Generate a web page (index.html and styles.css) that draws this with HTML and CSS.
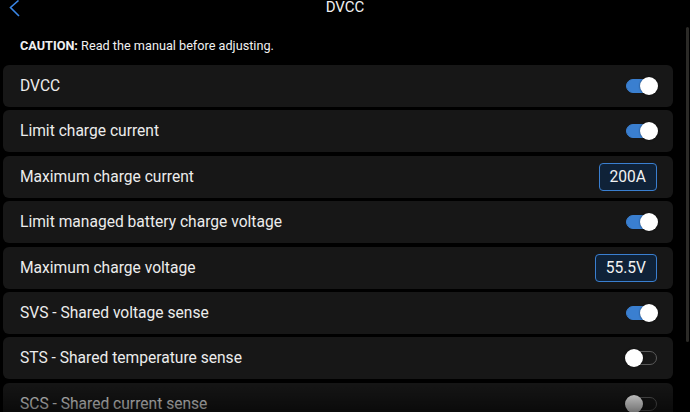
FILE: index.html
```html
<!DOCTYPE html>
<html>
<head>
<meta charset="utf-8">
<link rel="stylesheet" href="styles.css">
</head>
<body>
<div class="screen">
  <header class="topbar">
    <svg class="back" width="14" height="18" viewBox="0 0 14 18"><polyline points="9.5,0.5 1.5,7.5 10,16" fill="none" stroke="#3a86e6" stroke-width="1.6"/></svg>
    <div class="title">DVCC</div>
  </header>
  <div class="caution"><b>CAUTION:</b> Read the manual before adjusting.</div>
  <div class="list">
    <div class="row"><span class="label">DVCC</span><span class="switch on"><span class="knob"></span></span></div>
    <div class="row"><span class="label">Limit charge current</span><span class="switch on"><span class="knob"></span></span></div>
    <div class="row"><span class="label">Maximum charge current</span><span class="value">200A</span></div>
    <div class="row"><span class="label">Limit managed battery charge voltage</span><span class="switch on"><span class="knob"></span></span></div>
    <div class="row"><span class="label">Maximum charge voltage</span><span class="value">55.5V</span></div>
    <div class="row"><span class="label">SVS - Shared voltage sense</span><span class="switch on"><span class="knob"></span></span></div>
    <div class="row"><span class="label">STS - Shared temperature sense</span><span class="switch"><span class="knob"></span></span></div>
    <div class="row"><span class="label">SCS - Shared current sense</span><span class="switch"><span class="knob"></span></span></div>
  </div>
  <div class="scrollbar"></div>
  <div class="fade"></div>
</div>
</body>
</html>
```
FILE: styles.css
```css
html, body {
  margin: 0;
  padding: 0;
  background: #000;
}
body {
  width: 690px;
  height: 412px;
  overflow: hidden;
  font-family: Roboto, "Liberation Sans", sans-serif;
  color: #ececec;
}
.screen {
  position: relative;
  width: 690px;
  height: 412px;
  overflow: hidden;
}
.topbar {
  height: 30px;
  display: flex;
  justify-content: center;
  position: relative;
}
.back {
  position: absolute;
  left: 9px;
  top: 0;
}
.title {
  font-size: 15px;
  line-height: 14px;
  margin-top: 0;
  color: #f0f0f0;
}
.caution {
  height: 32px;
  line-height: 32px;
  padding-left: 20px;
  font-size: 12.7px;
  color: #f0f0f0;
}
.caution b {
  font-weight: 700;
}
.list {
  margin-top: 3px;
  margin-left: 3px;
  width: 670px;
  display: flex;
  flex-direction: column;
  gap: 3.4px;
}
.row {
  flex: none;
  height: 42px;
  background: #171717;
  border-radius: 6px;
  display: flex;
  align-items: center;
  justify-content: space-between;
  padding: 0 16px 0 17px;
}
.label {
  font-size: 15.6px;
  color: #ececec;
}
.switch {
  position: relative;
  width: 31px;
  height: 14px;
  border-radius: 7px;
  box-sizing: border-box;
  border: 1.5px solid #5a5a5a;
  background: transparent;
}
.switch.on {
  background: #3a7fd0;
  border-color: #3a7fd0;
}
.knob {
  position: absolute;
  top: 50%;
  left: -2px;
  width: 18px;
  height: 18px;
  margin-top: -9px;
  border-radius: 50%;
  background: #fff;
  box-shadow: 0 0 2px rgba(0,0,0,0.6);
}
.switch.on .knob {
  left: auto;
  right: -2px;
}
.value {
  box-sizing: border-box;
  height: 28px;
  padding: 0 10px;
  display: flex;
  align-items: center;
  border: 1.5px solid #3a7fd0;
  border-radius: 4px;
  background: #0f2238;
  font-size: 15.6px;
  color: #f2f2f2;
}
.scrollbar {
  position: absolute;
  left: 686px;
  top: 27px;
  width: 3px;
  height: 315px;
  border-radius: 2px;
  background: #2b2a27;
}
.fade {
  position: absolute;
  left: 0;
  right: 0;
  bottom: 0;
  height: 34px;
  background: linear-gradient(to bottom, rgba(0,0,0,0), rgba(0,0,0,0.55));
}
```
